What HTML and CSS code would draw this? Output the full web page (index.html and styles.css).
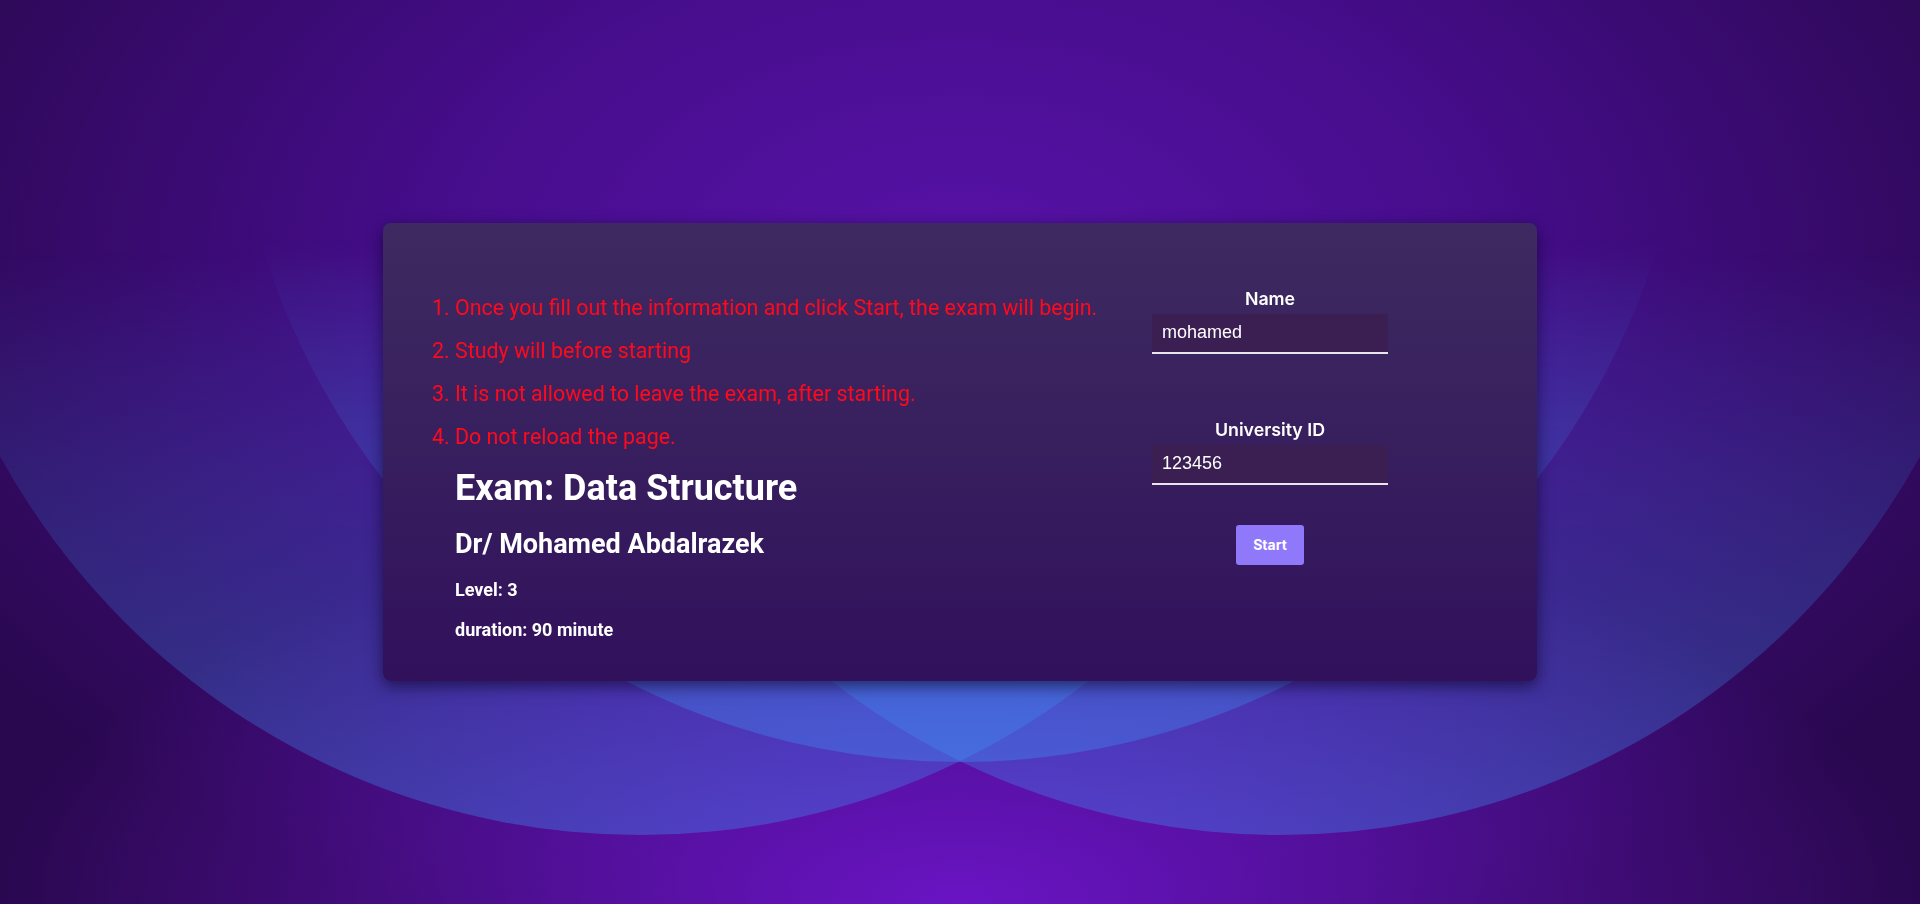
FILE: index.html
```html
<!DOCTYPE html>
<html lang="en">
<head>
<meta charset="utf-8">
<title>Exam</title>
<link rel="stylesheet" href="styles.css">
</head>
<body>
<svg class="bg-shapes" width="1920" height="904" viewBox="0 0 1920 904" aria-hidden="true">
  <defs>
    <linearGradient id="fade" x1="0" y1="0" x2="0" y2="1">
      <stop offset="0.6" stop-color="#3e93f5" stop-opacity="0"/>
      <stop offset="0.75" stop-color="#3e93f5" stop-opacity="0.15"/>
      <stop offset="1" stop-color="#3e93f5" stop-opacity="0.36"/>
    </linearGradient>
    <linearGradient id="fade-mid" x1="0" y1="0" x2="0" y2="1">
      <stop offset="0.64" stop-color="#3e93f5" stop-opacity="0"/>
      <stop offset="0.77" stop-color="#3e93f5" stop-opacity="0.15"/>
      <stop offset="1" stop-color="#3e93f5" stop-opacity="0.36"/>
    </linearGradient>
  </defs>
  <circle cx="640" cy="105" r="730" fill="url(#fade)"/>
  <circle cx="1280" cy="105" r="730" fill="url(#fade)"/>
  <circle cx="960" cy="32" r="730" fill="url(#fade-mid)"/>
</svg>
<main class="card">
  <section class="info">
    <ol class="rules">
      <li>Once you fill out the information and click Start, the exam will begin.</li>
      <li>Study will before starting</li>
      <li>It is not allowed to leave the exam, after starting.</li>
      <li>Do not reload the page.</li>
    </ol>
    <h1>Exam: Data Structure</h1>
    <h2>Dr/ Mohamed Abdalrazek</h2>
    <h4>Level: 3</h4>
    <h4>duration: 90 minute</h4>
  </section>
  <form class="form">
    <label class="label" for="name">Name</label>
    <input class="field" id="name" type="text" value="mohamed">
    <label class="label label-gap" for="uid">University ID</label>
    <input class="field" id="uid" type="text" value="123456">
    <button class="start" type="button">Start</button>
  </form>
</main>
</body>
</html>
```
FILE: styles.css
```css
* { box-sizing: border-box; }

html, body {
  margin: 0;
  height: 100%;
}

body {
  overflow: hidden;
  display: flex;
  align-items: center;
  justify-content: center;
  background:
    radial-gradient(ellipse 50% 45% at 50% 100%, #6a14c4 0%, rgba(106, 20, 196, 0) 100%),
    radial-gradient(ellipse 60% 80% at 50% 30%, #5812a8 0%, #460d8c 45%, #2a0850 100%);
  font-family: Roboto, "Liberation Sans", sans-serif;
}

.bg-shapes {
  position: fixed;
  left: 0;
  top: 0;
  z-index: 0;
}

.card {
  position: relative;
  z-index: 1;
  width: 1154px;
  display: flex;
  align-items: flex-start;
  padding: 66px 117px 22px 72px;
  border-radius: 8px;
  background: linear-gradient(to bottom, #3e2a60 0%, #38205e 45%, #31105c 100%);
  box-shadow: 0 5px 16px rgba(10, 0, 30, 0.6);
}

.info {
  flex: 1;
  padding-top: 6.5px;
  color: #fff;
}

.rules {
  margin: 0;
  padding: 0;
  color: #ff0a1c;
  font-size: 21.4px;
  line-height: 25px;
}

.rules li {
  margin-bottom: 18px;
  white-space: nowrap;
}

.info h1 {
  font-size: 36px;
  line-height: 42px;
  margin: 18px 0 19px;
}

.info h2 {
  font-size: 27px;
  line-height: 32px;
  margin: 19px 0;
}

.info h4 {
  font-size: 18px;
  line-height: 21px;
  margin: 19px 0;
}

.form {
  width: 300px;
  display: flex;
  flex-direction: column;
  align-items: center;
}

.label {
  font-family: Inter, "Open Sans", sans-serif;
  font-weight: 600;
  font-size: 17.8px;
  line-height: 20px;
  color: #fff;
}

.label-gap {
  margin-top: 66px;
}

.field {
  width: 236px;
  height: 40px;
  margin-top: 5px;
  padding: 0 10px;
  border: none;
  border-bottom: 2px solid #e8e6ec;
  background: #3c1f52;
  color: #fff;
  font-family: "Liberation Sans", Arial, sans-serif;
  font-size: 18px;
  outline: none;
}

.start {
  margin-top: 40px;
  width: 68px;
  height: 40px;
  border: none;
  border-radius: 3px;
  background: #8f78f9;
  color: #fff;
  font-family: Inter, "Open Sans", sans-serif;
  font-weight: 700;
  font-size: 14px;
}
```
